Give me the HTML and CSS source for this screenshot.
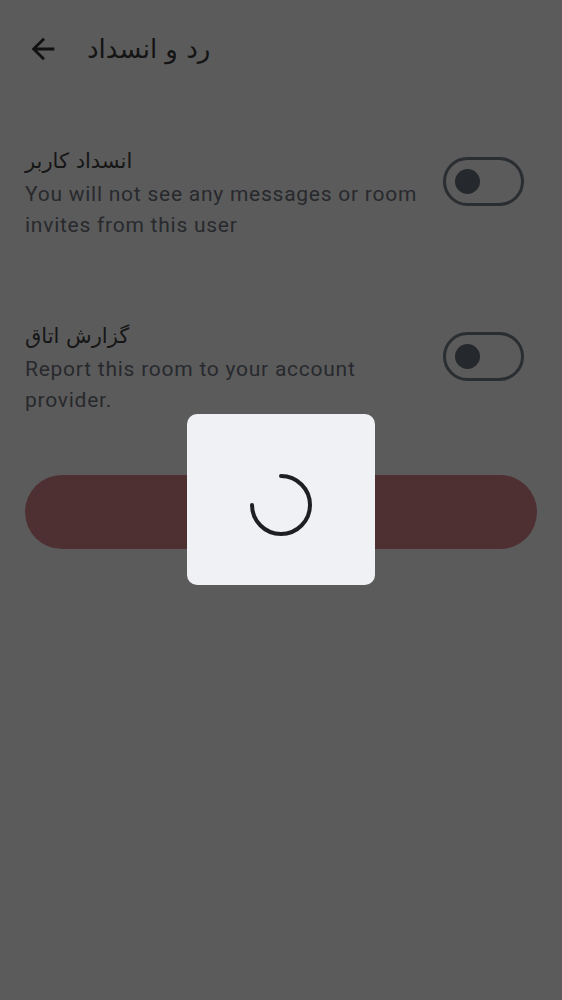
FILE: index.html
```html
<!DOCTYPE html>
<html lang="fa">
<head>
<meta charset="utf-8">
<title>رد و انسداد</title>
<link rel="stylesheet" href="styles.css">
</head>
<body>
<div class="page">
  <header class="appbar">
    <button class="back" aria-label="back">
      <svg viewBox="0 0 24 24" width="34" height="34"><path d="M20 11H7.83l5.59-5.59L12 4l-8 8 8 8 1.41-1.41L7.83 13H20v-2z" fill="currentColor"/></svg>
    </button>
    <h1 class="title" dir="rtl">رد و انسداد</h1>
  </header>

  <div class="list">
    <div class="tile">
      <div class="tile-text">
        <div class="tile-title"><span dir="rtl">انسداد کاربر</span></div>
        <div class="tile-sub">You will not see any messages or room invites from this user</div>
      </div>
      <div class="switch"><span class="thumb"></span></div>
    </div>

    <div class="tile">
      <div class="tile-text">
        <div class="tile-title"><span dir="rtl">گزارش اتاق</span></div>
        <div class="tile-sub">Report this room to your account provider.</div>
      </div>
      <div class="switch"><span class="thumb"></span></div>
    </div>

    <div class="action"></div>
  </div>
</div>

<div class="dialog" role="progressbar">
  <svg class="spinner" viewBox="0 0 62 62" width="62" height="62">
    <path d="M31 2 A29 29 0 1 1 2 31" fill="none" stroke="#1d1f23" stroke-width="4" stroke-linecap="round"/>
  </svg>
</div>
</body>
</html>
```

FILE: styles.css
```css
html, body {
  margin: 0;
  padding: 0;
}
body {
  background: #5b5b5b;
  font-family: Roboto, "DejaVu Sans", sans-serif;
  min-height: 1000px;
}
.page {
  display: flex;
  flex-direction: column;
}
.appbar {
  height: 98px;
  display: flex;
  align-items: center;
  padding-left: 26px;
  gap: 27px;
}
.back {
  background: none;
  border: 0;
  padding: 0;
  width: 34px;
  height: 34px;
  color: #111;
  display: flex;
}
.title {
  margin: 0;
  font-family: "DejaVu Sans", sans-serif;
  font-weight: normal;
  font-size: 26px;
  color: #141414;
  line-height: 30px;
}
.list {
  padding-top: 7px;
  display: flex;
  flex-direction: column;
}
.tile {
  display: flex;
  align-items: flex-start;
  padding: 41px 38px 39px 25px;
  gap: 24px;
}
.tile-text {
  flex: 1;
  display: flex;
  flex-direction: column;
}
.tile-title {
  font-family: "DejaVu Sans", sans-serif;
  font-size: 21px;
  line-height: 31px;
  color: #161616;
  text-align: left;
}
.tile-sub {
  padding-top: 2px;
  font-size: 21px;
  line-height: 31px;
  letter-spacing: 0.75px;
  color: #27292d;
}
.switch {
  margin-top: 11px;
  box-sizing: border-box;
  width: 81px;
  height: 49px;
  border: 3px solid #2a2d31;
  border-radius: 25px;
  display: flex;
  align-items: center;
  padding-left: 9px;
  flex-shrink: 0;
}
.thumb {
  width: 25px;
  height: 25px;
  border-radius: 50%;
  background: #25282c;
}
.action {
  margin: 20px 25px 0 25px;
  height: 74px;
  border-radius: 37px;
  background: #4e3033;
}
.dialog {
  position: fixed;
  left: 187px;
  top: 414px;
  width: 188px;
  height: 171px;
  box-sizing: border-box;
  padding-top: 10px;
  border-radius: 10px;
  background: #f0f1f5;
  display: flex;
  align-items: center;
  justify-content: center;
}
```
